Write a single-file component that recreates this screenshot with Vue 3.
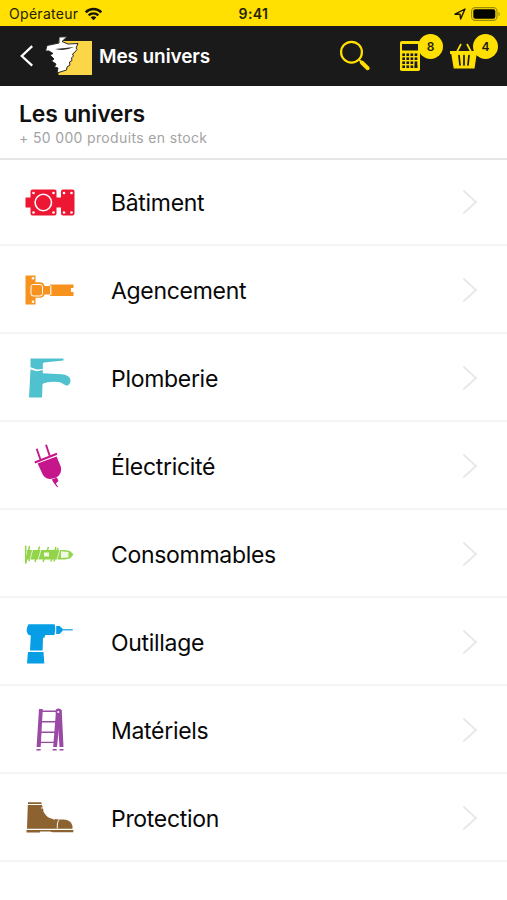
<template>
  <div class="app">
    <div class="status-bar">
      <span class="carrier">Opérateur</span>
      <svg class="wifi" viewBox="0 0 20 14">
        <path d="M1.8 5.2a11.6 11.6 0 0 1 16.4 0" fill="none" stroke="#16150a" stroke-width="2.7" />
        <path d="M4.9 8.5a7.2 7.2 0 0 1 10.2 0" fill="none" stroke="#16150a" stroke-width="2.5" />
        <path d="M10 13.6L7 10.6a4.2 4.2 0 0 1 6 0z" fill="#16150a" />
      </svg>
      <span class="clock">9:41</span>
      <svg class="location" viewBox="0 0 12 12">
        <path d="M1 6.2L11 1L6.6 11L6 6.2z" fill="none" stroke="#16150a" stroke-width="1.4" stroke-linejoin="round" />
      </svg>
      <svg class="battery" viewBox="0 0 30 14">
        <rect x="0.6" y="0.6" width="25.4" height="12.8" rx="3.6" fill="none" stroke="#9b8b08" stroke-width="1.1" />
        <rect x="2.3" y="2.3" width="22" height="9.4" rx="2" fill="#050500" />
        <path d="M27.5 4.6q2.6 2.4 0 4.8z" fill="#9b8b08" />
      </svg>
    </div>

    <header class="nav-bar">
      <svg class="back" viewBox="0 0 16 24">
        <path d="M13.2 2.2L2.8 12L13.2 21.6" fill="none" stroke="#fff" stroke-width="2.3" />
      </svg>
      <svg class="logo" viewBox="0 0 48 40">
        <rect x="13.5" y="5" width="33.5" height="34" fill="#fbd648" />
        <path
          d="M14 1L22 .8L17 5.5L23 8L33 7.5L31 12L32 13.5L29 17L27.5 18L28.5 20L26.5 22L27 24.5L24.5 26L25 29L22 31L21.5 34L12 37L13 32L9.5 31L11 28L6.5 25L9 23L5 19L8 17.5L4 15L.5 15L2 9.5L14 7z"
          fill="#fff"
          stroke="#292722"
          stroke-width="1"
          stroke-linejoin="round"
        />
        <path d="M10 13Q20 15.5 29 11Q20 12.2 10 13z" fill="#34312b" />
      </svg>
      <h1 class="nav-title">Mes univers</h1>
      <button class="action search" aria-label="Rechercher">
        <svg viewBox="0 0 32 32">
          <circle cx="12.5" cy="12.2" r="10.4" fill="none" stroke="#ffe000" stroke-width="2.2" />
          <path d="M20 19.7L22.5 22.2" stroke="#ffe000" stroke-width="1.8" />
          <path d="M22.8 22.5L28.7 28.2" stroke="#ffe000" stroke-width="4" stroke-linecap="round" />
        </svg>
      </button>
      <button class="action calculator" aria-label="Calculatrice">
        <svg viewBox="0 0 20 30">
          <rect width="20" height="30" rx="1.8" fill="#ffe000" />
          <rect x="2" y="3" width="16" height="6.5" fill="#1a1a1a" />
          <template v-for="row in 4" :key="row">
            <rect
              v-for="col in 4"
              :key="col"
              :x="-1.8 + col * 4.1"
              :y="8.4 + row * 4"
              width="2.7"
              :height="col === 4 && row === 3 ? 6.6 : 2.6"
              fill="#1a1a1a"
            />
          </template>
        </svg>
        <span class="badge">8</span>
      </button>
      <button class="action basket" aria-label="Panier">
        <svg viewBox="0 0 30 26">
          <path d="M7.8 9L12 1M22.2 9L18 1" stroke="#ffe000" stroke-width="1.7" />
          <path d="M1 8H29V11H27.7L25.5 25.5H4.7L2.3 11H1z" fill="#ffe000" />
          <path d="M10 12.5l1 9.5M15 12.5V22M20 12.5L19 22" stroke="#1a1a1a" stroke-width="1.7" stroke-linecap="round" />
        </svg>
        <span class="badge">4</span>
      </button>
    </header>

    <section class="heading">
      <h2>Les univers</h2>
      <p>+ 50 000 produits en stock</p>
    </section>

    <ul class="categories">
      <li v-for="item in categories" :key="item.id" class="category">
        <svg class="category-icon" :class="item.id" viewBox="0 0 90 70">
          <g v-if="item.id === 'batiment'">
            <path
              d="M22.5 22.5H44.5Q46.5 22.5 46.5 24.5V30.5H51V24.5Q51 22.5 53 22.5H62.5Q64.5 22.5 64.5 24.5V46.5Q64.5 48.5 62.5 48.5H53Q51 48.5 51 46.5V40.5H46.5V46.5Q46.5 48.5 44.5 48.5H22.5Q20.5 48.5 20.5 46.5V40.5H15.5V30.5H20.5V24.5Q20.5 22.5 22.5 22.5z"
            />
            <circle cx="33.3" cy="35.5" r="8.2" fill="none" stroke="#fff" stroke-width="1.6" />
            <g fill="#fff">
              <circle v-for="(hole, i) in plateHoles" :key="i" :cx="hole[0]" :cy="hole[1]" r="1.3" />
            </g>
          </g>
          <g v-else-if="item.id === 'agencement'">
            <path
              d="M15.5 20.5H25.5V27.3H30Q34 27.5 34.5 31H40V29.5H63.5V33H61V37H63.5V41H40V39.5H34.5Q34 42.5 30 42.8H25.5V49.5H15.5z"
            />
            <rect x="21" y="29.5" width="11.5" height="11.5" rx="2.4" fill="none" stroke="#fff" stroke-width="1" />
            <path d="M40.8 30.5V40" stroke="#fff" stroke-width="1.1" />
            <circle cx="23" cy="23.3" r="1.3" fill="#fff" />
            <circle cx="23" cy="46.8" r="1.3" fill="#fff" />
          </g>
          <g v-else-if="item.id === 'plomberie'">
            <path d="M20.5 15.5H53.5V17.4L34 19.5L32.8 20.5V26L27 26.6L20.5 24.2z" />
            <path d="M20.5 26.5L27 28.3L32.8 27V30.3L52 31.3Q60.5 32.5 60.5 37.5Q60.3 41.5 57 42.8L53.5 41.2Q50 38.3 41 39Q33 39.5 32.5 41.5L32 54.5H19z" />
          </g>
          <g v-else-if="item.id === 'electricite'">
            <path d="M26.7 17.8L30.4 28.5M36 13.7L39.7 24.8" fill="none" stroke="currentColor" stroke-width="1.9" />
            <path d="M24.8 31.5L47 22.8" fill="none" stroke="currentColor" stroke-width="2.2" />
            <path d="M27.6 32.6L46.6 25.4L50.9 36Q52.5 43 45.8 46.8Q37 50 33 44z" />
            <path d="M41.8 48.6L47 46.6L48.4 50L45.9 52.5L48.4 56.3L46.7 55.8L43.8 52z" />
          </g>
          <g v-else-if="item.id === 'consommables'">
            <path d="M17 31H55L60 32L63.5 35.5L60 39.5L55 40.5H17z" />
            <path
              d="M15.7 26.5V44.5L19.5 27M19 42L21.5 32M25 43L29.5 27.5M33 43L38.5 28M41 42.5L46 28M44 42.5L48 29"
              fill="none"
              stroke="currentColor"
              stroke-width="1.5"
            />
            <path d="M34 33.5H39V37.5H34zM51 32.3L58.5 33V38.5L51 39z" fill="#fff" opacity=".85" />
            <path d="M23 29L20 41M31.5 29L28 41M50 30L47 41" fill="none" stroke="#fff" stroke-width=".7" />
          </g>
          <g v-else-if="item.id === 'outillage'">
            <path d="M18.5 17.3H44.5Q46 20.5 44.5 28H35.3L34.5 30.5L33 31L32.6 43.5H20L20.8 28.5L18 27.5Q15.2 23 18.5 17.3z" />
            <path d="M46.2 19H49.5L52.5 21.5V24L49.5 27H46.2z" />
            <path d="M52 22.8H62.8" stroke="currentColor" stroke-width="1.2" />
            <path d="M18 45H33.5L34.3 56.5H17z" />
          </g>
          <g v-else-if="item.id === 'materiels'">
            <path
              d="M31 16.2H50M31 26.8H47M31 37.2H46M30 47.4H45"
              fill="none"
              stroke="currentColor"
              stroke-width="1.4"
            />
            <path d="M29 14H32.8L30.7 52H26.6zM46 16H49L49.4 28L47 52H43.2z" />
            <path d="M47 15H51.7L53.5 52H49.5z" />
            <circle cx="48.5" cy="16.5" r="3" />
            <circle cx="48.3" cy="17" r="1.1" fill="#fff" />
            <path d="M26.5 54.8H30.7M42.5 54.8H46.7M49.5 54.8H53.5" stroke="currentColor" stroke-width="1.6" />
          </g>
          <g v-else>
            <path d="M18 19.2H31.5V21H18zM17.8 22H32L34 29.5Q37 35 43 36L51 36.5Q61 35.5 62.5 43V45.7H17z" />
            <path d="M16.5 47H63.3V49.2H43L40 48.5H30V49.5H16.5z" />
            <path d="M49.3 36.2Q47 38.5 47.3 45.5" fill="none" stroke="#fff" stroke-width="1" />
            <path d="M31 25h1.8M33.5 28.3h1.8M36 31.5h1.8M39 34h1.8M43 36h1.8" stroke="#fff" stroke-width="1.2" />
          </g>
        </svg>
        <span class="category-name">{{ item.name }}</span>
        <svg class="chevron" viewBox="0 0 16 26">
          <path d="M1.3 1.5L14 13L1.3 24.5" fill="none" stroke="#e8e8e8" stroke-width="1.9" />
        </svg>
      </li>
    </ul>
  </div>
</template>

<script setup>
const categories = [
  { id: 'batiment', name: 'Bâtiment' },
  { id: 'agencement', name: 'Agencement' },
  { id: 'plomberie', name: 'Plomberie' },
  { id: 'electricite', name: 'Électricité' },
  { id: 'consommables', name: 'Consommables' },
  { id: 'outillage', name: 'Outillage' },
  { id: 'materiels', name: 'Matériels' },
  { id: 'protection', name: 'Protection' }
]

const plateHoles = [
  [23.5, 26],
  [43.5, 26],
  [23.5, 45.5],
  [43.5, 45.5],
  [54, 26],
  [61.5, 26],
  [54, 45.5],
  [61.5, 45.5]
]
</script>

<style>
body {
  margin: 0;
  background: #fff;
}
</style>

<style scoped>
.app {
  width: 100%;
  min-height: 900px;
  overflow: hidden;
  background: #fff;
  color: #111;
  font-family: Inter, 'Liberation Sans', sans-serif;
}

.status-bar {
  position: relative;
  display: flex;
  align-items: center;
  box-sizing: border-box;
  height: 26px;
  padding: 1px 7px 0 9px;
  background: #ffe000;
  color: #24220a;
}

.carrier {
  width: 70px;
  font-size: 14px;
  letter-spacing: 0.3px;
  white-space: nowrap;
}

.wifi {
  width: 19px;
  height: 14px;
  margin-left: 5px;
}

.clock {
  position: absolute;
  left: 0;
  right: 0;
  text-align: center;
  font-size: 14px;
  font-weight: 600;
  letter-spacing: 0.4px;
}

.location {
  width: 12px;
  height: 12px;
  margin-left: auto;
}

.battery {
  width: 30px;
  height: 14px;
  margin-left: 5px;
  margin-right: -1px;
}

.nav-bar {
  display: flex;
  align-items: center;
  height: 60px;
  background: #1a1a1a;
}

.back {
  width: 16px;
  height: 24px;
  margin-left: 19px;
}

.logo {
  width: 48px;
  height: 40px;
  margin-left: 10px;
}

.nav-title {
  margin: 0 0 0 6px;
  color: #fff;
  font-size: 19px;
  font-weight: 600;
  letter-spacing: -0.1px;
  white-space: nowrap;
}

.action {
  position: relative;
  display: block;
  padding: 0;
  border: 0;
  background: none;
  font-family: inherit;
}

.action svg {
  display: block;
  width: 100%;
  height: 100%;
}

.search {
  width: 32px;
  height: 32px;
  margin-left: auto;
}

.calculator {
  width: 20px;
  height: 30px;
  margin-left: 29px;
}

.basket {
  width: 30px;
  height: 26px;
  margin: 0 28px 0 29px;
}

.badge {
  position: absolute;
  top: -7px;
  left: 18px;
  width: 25px;
  height: 25px;
  border-radius: 50%;
  background: #ffe000;
  color: #1a1a1a;
  font-size: 12px;
  font-weight: 600;
  line-height: 25px;
  text-align: center;
}

.basket .badge {
  top: -9px;
  left: 24px;
}

.heading {
  box-sizing: border-box;
  height: 74px;
  padding: 14px 19px 0;
  border-bottom: 2px solid #e5e5e5;
}

.heading h2 {
  margin: 0;
  font-size: 23px;
  font-weight: 600;
  letter-spacing: -0.15px;
  line-height: 28px;
}

.heading p {
  margin: 0;
  color: #a3a3a3;
  font-size: 14px;
  letter-spacing: 0.35px;
  line-height: 20px;
}

.categories {
  margin: -2px 0 0;
  padding: 0;
  list-style: none;
}

.category {
  display: flex;
  align-items: center;
  box-sizing: border-box;
  height: 88px;
  padding: 2px 29px 0 10px;
  border-bottom: 2px solid #f4f4f4;
}

.category:first-child {
  border-top: 0;
}

.category-icon {
  flex: none;
  width: 90px;
  height: 70px;
  fill: currentColor;
}

.category-name {
  margin-left: 11px;
  padding-top: 2px;
  color: #080808;
  font-size: 23px;
  letter-spacing: -0.3px;
}

.chevron {
  width: 16px;
  height: 26px;
  margin-left: auto;
}

.batiment {
  color: #ed1734;
}

.agencement {
  color: #f7921e;
}

.plomberie {
  color: #50c1cf;
}

.electricite {
  color: #c5168c;
}

.consommables {
  color: #93d44b;
}

.outillage {
  color: #079ee5;
}

.materiels {
  color: #9a4aa5;
}

.protection {
  color: #8b6230;
}
</style>
